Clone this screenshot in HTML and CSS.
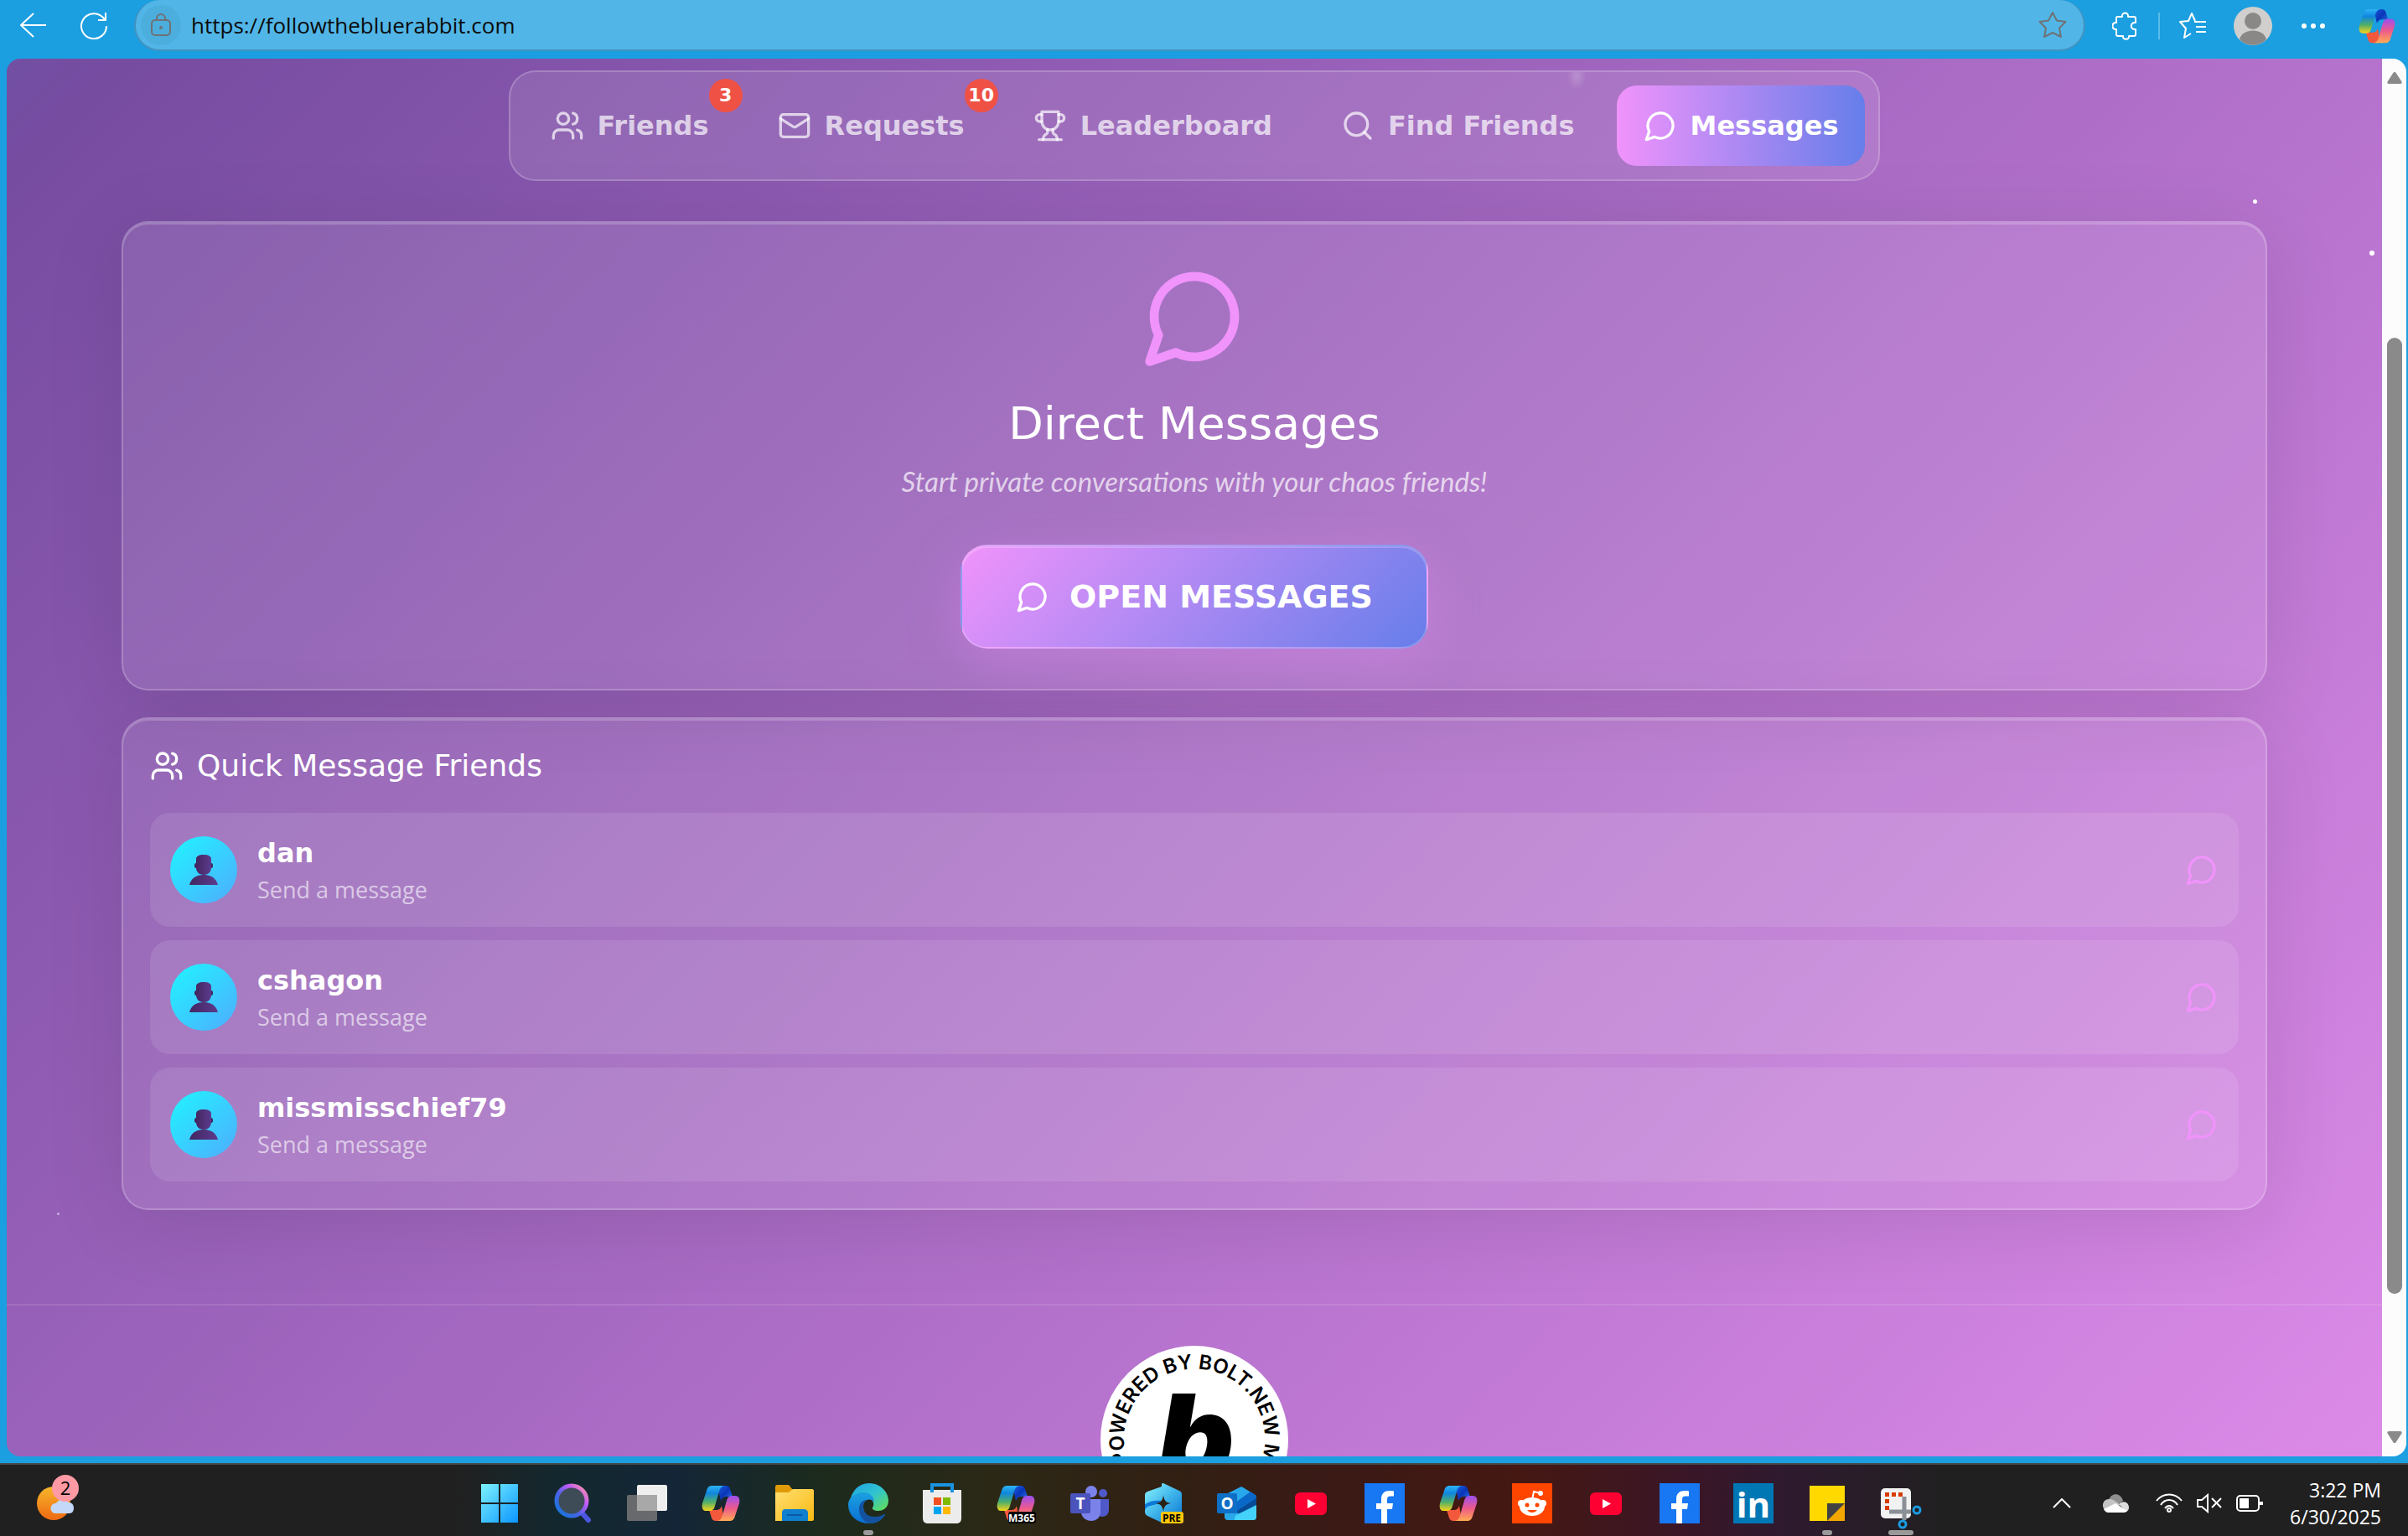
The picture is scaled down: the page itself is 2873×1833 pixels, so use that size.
FILE: index.html
```html
<!DOCTYPE html>
<html lang="en">
<head>
<meta charset="utf-8"/>
<meta content="width=device-width, initial-scale=1" name="viewport"/>
<title>Follow the Blue Rabbit - Messages</title>
<link rel="stylesheet" href="styles.css">
</head>
<body>

<!-- shared icons -->
<svg class="sprite" aria-hidden="true">
  <defs>
    <linearGradient id="cpLeft" x1="0" y1="0" x2="0" y2="1">
      <stop offset="0" stop-color="#2fb4f5"/><stop offset=".3" stop-color="#0f86de"/>
      <stop offset=".65" stop-color="#4fae6a"/><stop offset="1" stop-color="#f7d418"/>
    </linearGradient>
    <linearGradient id="cpRight" x1="0" y1="0" x2="0" y2="1">
      <stop offset="0" stop-color="#9a4ff0"/><stop offset=".5" stop-color="#ee5a8c"/><stop offset="1" stop-color="#ffab52"/>
    </linearGradient>
    <linearGradient id="cpBlue" x1="0" y1="0" x2="1" y2="1">
      <stop offset="0" stop-color="#1a5fe0"/><stop offset=".5" stop-color="#0a35b8"/><stop offset="1" stop-color="#2d7cf0"/>
    </linearGradient>
    <linearGradient id="person" x1="0" y1="0" x2="1" y2="0">
      <stop offset="0" stop-color="#432662"/><stop offset="1" stop-color="#5c3b8c"/>
    </linearGradient>
    <linearGradient id="win" x1="0" y1="0" x2="1" y2="1">
      <stop offset="0" stop-color="#7df3ff"/><stop offset="1" stop-color="#0a95ff"/>
    </linearGradient>
    <linearGradient id="ring" x1="1" y1="0" x2="0" y2="1">
      <stop offset="0" stop-color="#ff9a9a"/><stop offset=".3" stop-color="#c25cf5"/>
      <stop offset=".6" stop-color="#4a63e8"/><stop offset="1" stop-color="#0a7ad6"/>
    </linearGradient>
    <linearGradient id="folder" x1="0" y1="0" x2="1" y2="1">
      <stop offset="0" stop-color="#ffdf71"/><stop offset="1" stop-color="#f9b913"/>
    </linearGradient>
    <linearGradient id="edgeTop" x1="0" y1="0" x2="1" y2="1">
      <stop offset="0" stop-color="#1fa0e4"/><stop offset=".5" stop-color="#30c3d0"/><stop offset="1" stop-color="#66e04e"/>
    </linearGradient>
    <linearGradient id="edgeBlue" x1="0" y1="0" x2="0" y2="1">
      <stop offset="0" stop-color="#1ba0e0"/><stop offset="1" stop-color="#0b6fd3"/>
    </linearGradient>
    <linearGradient id="sun" x1="0" y1="0" x2="0" y2="1">
      <stop offset="0" stop-color="#f6b62c"/><stop offset="1" stop-color="#ee6a12"/>
    </linearGradient>
    <linearGradient id="preA" x1="0" y1="0" x2="1" y2="1">
      <stop offset="0" stop-color="#8df5ff"/><stop offset=".5" stop-color="#3fb5ea"/><stop offset="1" stop-color="#0b72d2"/>
    </linearGradient>
  </defs>
  <symbol id="i-chat" viewBox="0 0 24 24"><path d="M7.9 20A9 9 0 1 0 4 16.1L2 22Z"/></symbol>
  <symbol id="i-users" viewBox="0 0 24 24">
    <path d="M16 21v-2a4 4 0 0 0-4-4H6a4 4 0 0 0-4 4v2"/><circle cx="9" cy="7" r="4"/>
    <path d="M22 21v-2a4 4 0 0 0-3-3.87"/><path d="M16 3.13a4 4 0 0 1 0 7.75"/>
  </symbol>
  <symbol id="i-copilot" viewBox="0 0 48 48">
    <path d="M20 3h10c4 0 5 3 6 7l2 6h-7c-4 0-6 2-7 5z" fill="url(#cpBlue)"/>
    <path d="M28 45H18c-4 0-5-3-6-7l-2-6h8c4 0 6-2 7-5z" fill="#f2593c"/>
    <path d="M14 3h15c-4 0-6 3-7 7l-5 17c-1 4-3 6-7 6H7c-5 0-6-4-5-9L7 9c1-4 3-6 7-6z" fill="url(#cpLeft)"/>
    <path d="M34 45H19c4 0 6-3 7-7l5-17c1-4 3-6 7-6h3c5 0 6 4 5 9l-5 15c-1 4-3 6-7 6z" fill="url(#cpRight)"/>
  </symbol>
  <symbol id="i-person" viewBox="0 0 34 36">
    <path d="M0 36c2-8 8-12 17-12s15 4 17 12z" fill="url(#person)"/>
    <ellipse cx="8" cy="13" rx="2" ry="3" fill="#3d235a"/><ellipse cx="26" cy="13" rx="2" ry="3" fill="#3d235a"/>
    <path d="M8 5c0-3 3-5 9-5s9 2 9 5v10c0 5-3 9-9 9s-9-4-9-9z" fill="url(#person)"/>
  </symbol>
  <symbol id="i-youtube" viewBox="0 0 48 48">
    <rect x="5" y="11" width="38" height="27" rx="6" fill="#ff0033"/><path d="M20 19l10 5.500-10 5.500z" fill="#fff"/>
  </symbol>
  <symbol id="i-facebook" viewBox="0 0 48 48">
    <rect width="48" height="48" fill="#1877f2"/>
    <path d="M20 48V31h-6v-7h6v-5c0-7 4-10 10-10 2 0 4 0 5 .400v6h-4c-3 0-4 1.600-4 4V24h7l-1 7h-6v17z" fill="#fff"/>
  </symbol>
</svg>

<div class="browser">
  <header class="toolbar">
    <button class="tool-btn" type="button" aria-label="Back">
      <svg width="32" height="32" viewBox="0 0 32 32"><path d="M31 15H1M16 1L1 15l15 14"/></svg>
    </button>
    <button class="tool-btn reload" type="button" aria-label="Refresh">
      <svg width="32" height="32" viewBox="0 0 32 32"><path d="M31 16a15 15 0 1 1-5-11l4 4M30 0v9h-9"/></svg>
    </button>
    <form class="address">
      <span class="lock">
        <svg width="24" height="28" viewBox="0 0 24 28"><rect x="1" y="8" width="22" height="18" rx="4"/><path d="M7 8V6a5 5 0 0 1 10 0v2"/><circle cx="12" cy="17" r="1"/></svg>
      </span>
      <input type="text" aria-label="Address" value="https://followthebluerabbit.com"/>
      <button class="fav" type="button" aria-label="Add to favorites">
        <svg width="34" height="32" viewBox="0 0 34 32"><path d="M17 1l5 9.500 10.500 1.500-7.500 7.500 2 10.500-10-5-10 5 2-10.500L1.500 12 12 10.500z"/></svg>
      </button>
    </form>
    <div class="tools">
      <button class="tool-btn" type="button" aria-label="Extensions">
        <svg width="32" height="34" viewBox="0 0 32 34"><path d="M6 6h6c-1-6 8-6 7 0h7c1 0 2 1 2 2v5c-7-1-7 9 0 8v6c0 1-1 2-2 2h-6c1 5-8 5-7 0H7c-1 0-2-1-2-2v-6c-6 1-6-9 0-8V8c0-1 0-2 1-2z"/></svg>
      </button>
      <span class="divider"></span>
      <button class="tool-btn" type="button" aria-label="Favorites">
        <svg width="34" height="34" viewBox="0 0 34 34"><path d="M20 11l-4-9-4 9-10 1 7 8-2 11 8-5M19 12h14M21 18h12M21 24h12"/></svg>
      </button>
      <button class="tool-btn" type="button" aria-label="Profile">
        <svg class="solid" width="46" height="46" viewBox="0 0 46 46"><circle cx="23" cy="23" r="23" fill="#d0cfcd"/><circle cx="23" cy="17" r="10" fill="#8a8886"/><path d="M7 39c3-14 29-14 32 0-8 9-24 9-32 0z" fill="#8a8886"/></svg>
      </button>
      <button class="tool-btn" type="button" aria-label="More">
        <svg class="solid" width="28" height="8" viewBox="0 0 28 8"><circle cx="3" cy="4" r="3" fill="#fff"/><circle cx="14" cy="4" r="3" fill="#fff"/><circle cx="25" cy="4" r="3" fill="#fff"/></svg>
      </button>
      <button class="tool-btn copilot" type="button" aria-label="Copilot">
        <svg class="solid" width="46" height="46"><use href="#i-copilot"/></svg>
      </button>
    </div>
  </header>

  <div class="viewport">
    <div class="page">
      <span class="particle p1"></span>
      <span class="particle p2"></span>
      <span class="particle p3"></span>

      <main class="container">
        <nav class="tabs">
          <button class="tab" type="button">
            <svg class="icon"><use href="#i-users"/></svg>Friends<span class="count">3</span></button>
          <button class="tab" type="button">
            <svg class="icon" viewBox="0 0 24 24"><rect width="20" height="16" x="2" y="4" rx="2"/><path d="m22 7-8.970 5.700a1.940 1.940 0 0 1-2.060 0L2 7"/></svg>Requests<span class="count">10</span></button>
          <button class="tab" type="button">
            <svg class="icon" viewBox="0 0 24 24"><path d="M6 9H4.500a2.500 2.500 0 0 1 0-5H6"/><path d="M18 9h1.500a2.500 2.500 0 0 0 0-5H18"/><path d="M4 22h16"/><path d="M10 14.660V17c0 .550-.470.980-.970 1.210C7.850 18.750 7 20.240 7 22"/><path d="M14 14.660V17c0 .550.470.980.970 1.210C16.150 18.750 17 20.240 17 22"/><path d="M18 2H6v7a6 6 0 0 0 12 0V2Z"/></svg>Leaderboard
          </button>
          <button class="tab" type="button">
            <svg class="icon" viewBox="0 0 24 24"><circle cx="11" cy="11" r="8"/><path d="m21 21-4.300-4.300"/></svg>Find Friends
          </button>
          <button class="tab active" type="button">
            <svg class="icon"><use href="#i-chat"/></svg>Messages
          </button>
          <span class="glow"></span>
        </nav>

        <section class="card hero">
          <svg class="icon hero-icon"><use href="#i-chat"/></svg>
          <h2>Direct Messages</h2>
          <p>Start private conversations with your chaos friends!</p>
          <button class="open-btn" type="button"><svg class="icon"><use href="#i-chat"/></svg>OPEN MESSAGES</button>
        </section>

        <section class="card quick">
          <h3><svg class="icon"><use href="#i-users"/></svg>Quick Message Friends</h3>
          <button class="friend" type="button">
            <span class="avatar"><svg width="34" height="36"><use href="#i-person"/></svg></span>
            <span class="info"><span class="name">dan</span><span class="hint">Send a message</span></span>
            <svg class="icon"><use href="#i-chat"/></svg>
          </button>
          <button class="friend" type="button">
            <span class="avatar"><svg width="34" height="36"><use href="#i-person"/></svg></span>
            <span class="info"><span class="name">cshagon</span><span class="hint">Send a message</span></span>
            <svg class="icon"><use href="#i-chat"/></svg>
          </button>
          <button class="friend" type="button">
            <span class="avatar"><svg width="34" height="36"><use href="#i-person"/></svg></span>
            <span class="info"><span class="name">missmisschief79</span><span class="hint">Send a message</span></span>
            <svg class="icon"><use href="#i-chat"/></svg>
          </button>
        </section>
      </main>

      <footer class="site-footer">
        <a href="#" aria-label="Powered by Bolt.new">
          <svg width="224" height="224" viewBox="0 0 224 224">
            <circle cx="112" cy="112" r="112" fill="#fff"/>
            <path id="ringPath" d="M33 140A84 84 0 1 1 191 140" fill="none"/>
            <text class="ring-text"><textPath href="#ringPath">POWERED BY BOLT.NEW M</textPath></text>
            <text class="ring-b" x="68" y="160">b</text>
          </svg>
        </a>
      </footer>
    </div>

    <div class="scrollbar" aria-hidden="true">
      <svg width="18" height="14" viewBox="0 0 18 14"><path d="M7 1.500c1-2 3-2 4 0l6.500 10c.500 1 0 2.500-1.500 2.500H2C.500 14 0 12.500.500 11.500z"/></svg>
      <div class="track"><div class="thumb"></div></div>
      <svg width="18" height="14" viewBox="0 0 18 14"><path d="M7 12.500c1 2 3 2 4 0l6.500-10C18 1.500 17.500 0 16 0H2C.500 0 0 1.500.500 2.500z"/></svg>
    </div>
  </div>
</div>

<div class="taskbar">
  <button class="widget" type="button" aria-label="Widgets">
    <svg width="50" height="56" viewBox="0 0 50 56">
      <circle cx="20" cy="34" r="20" fill="url(#sun)"/>
      <path d="M22 46a6 6 0 0 1 1-12 9 9 0 0 1 15-1c5 0 6 4 6 7s-2 6-5 6z" fill="#c4d9fa"/>
      <circle cx="34" cy="16" r="16" fill="#ff9aa5"/>
      <text class="widget-num" x="34" y="24">2</text>
    </svg>
  </button>

  <div class="apps">
    <button type="button" aria-label="Start"><svg viewBox="0 0 48 48"><path d="M2 1h21v22H2zM25 1h21v22H25zM2 25h21v22H2zM25 25h21v22H25z" fill="url(#win)"/></svg></button>
    <button type="button" aria-label="Search"><svg viewBox="0 0 48 48"><path d="M34 35l8 9" stroke="#4a56e2" stroke-width="6" stroke-linecap="round"/><circle cx="22" cy="21" r="18" fill="#3d4c57" stroke="url(#ring)" stroke-width="5"/></svg></button>
    <button type="button" aria-label="Task view"><svg viewBox="0 0 48 48"><rect x="12" y="2" width="36" height="31" rx="2" fill="#efefef"/><rect x="0" y="14" width="36" height="31" rx="2" fill="#777" fill-opacity=".85"/><rect x="12" y="14" width="24" height="19" fill="#a8a8a8"/></svg></button>
    <button type="button" aria-label="Copilot"><svg><use href="#i-copilot"/></svg></button>
    <button type="button" aria-label="File Explorer"><svg viewBox="0 0 48 48"><path d="M1 4c0-1 1-2 2-2h14l5 6v8H1z" fill="#e09a08"/><path d="M1 11h16l5-4h23c1 0 2 1 2 2v34c0 1-1 2-2 2H1z" fill="url(#folder)"/><path d="M9 45V35c0-2 1-4 4-4h22c3 0 5 2 5 4v10z" fill="#0f7fd0"/><path d="M15 38h18" stroke="#0a5aa5" stroke-width="2"/></svg></button>
    <button class="running" type="button" aria-label="Edge"><svg viewBox="0 0 48 48"><path d="M2 22C4 9 13 0 25 0c13 0 23 10 23 21 0 8-6 12-12 12-5 0-8-2-7-4 3-4 1-12-9-13C10 15 3 19 2 22z" fill="url(#edgeTop)"/><path d="M0 26c0-9 9-15 18-15 9 0 13 6 13 11-6-5-13-2-13 6 0 9 7 13 14 13 5 0 9-2 11-4 1 0 1 1 0 2-4 6-11 9-18 9C10 48 0 38 0 26z" fill="url(#edgeBlue)"/><path d="M13 31c0-6 3-10 8-11-2 2-3 5-3 8 0 9 7 12 14 12 5 0 9-2 11-3 1 0 1 1 0 2-3 5-9 9-17 9-8-2-13-9-13-17z" fill="#12529f"/></svg></button>
    <button type="button" aria-label="Store"><svg viewBox="0 0 48 48"><path d="M1 8h46v33c0 5-2 7-6 7H7c-4 0-6-2-6-7z" fill="#ececec"/><path d="M12 11V2h24v9" fill="none" stroke="#1a93e0" stroke-width="4"/><path d="M14 17h9v9h-9z" fill="#f25022"/><path d="M25 17h9v9h-9z" fill="#7fba00"/><path d="M14 28h9v9h-9z" fill="#00a4ef"/><path d="M25 28h9v9h-9z" fill="#ffb900"/></svg></button>
    <button type="button" aria-label="Microsoft 365 Copilot"><svg viewBox="0 0 48 48"><use href="#i-copilot"/><rect x="15" y="34" width="33" height="14" rx="3" fill="#000"/><text class="tag tag-white" x="31" y="46">M365</text></svg></button>
    <button type="button" aria-label="Teams"><svg viewBox="0 0 48 48"><circle cx="40" cy="12" r="5" fill="#5059c9"/><path d="M32 19h15v13c0 5-4 8-8 8s-7-3-7-6z" fill="#5059c9"/><circle cx="26" cy="10" r="7" fill="#7b83eb"/><path d="M14 19h23v15c0 7-5 11-11 11s-12-4-12-11z" fill="#7b83eb"/><rect x="1" y="12" width="24" height="24" rx="2" fill="#4b53bc"/><text class="letter" x="13" y="31">T</text></svg></button>
    <button type="button" aria-label="Preview app"><svg viewBox="0 0 48 48"><path d="M2 14c0-2 1-3 3-4l17-6V1c0-1 1-1 2-1l19 9c2 1 3 2 3 4v20c0 3-1 4-3 5l-17 9c-1 1-3 1-4 0L5 39c-2-1-3-3-3-5z" fill="url(#preA)"/><path d="M2 33c2-9 12-4 20-12-7-1-14 0-20 4z" fill="#0c7ad8"/><path d="M24 14c1 7 3 9 9 10-6 1-8 3-9 10-1-7-3-9-9-10 6-1 8-3 9-10z" fill="#2c2214"/><rect x="21" y="34" width="27" height="14" rx="3" fill="#ffc60a"/><text class="tag" x="34" y="46">PRE</text></svg></button>
    <button type="button" aria-label="Outlook"><svg viewBox="0 0 48 48"><path d="M9 14L27 5c1-1 3-1 4 0l16 10v25c0 3-2 4-4 4H13c-3 0-4-2-4-4z" fill="#28a8ea"/><path d="M18 26L40 10l7 5v9L24 36z" fill="#0a68c8"/><path d="M24 33l23-15v9L26 39z" fill="#064a94"/><path d="M21 44c0-6 3-7 8-9l18-9v14c0 3-2 4-4 4z" fill="#45d2fa"/><rect x="0" y="12" width="24" height="24" rx="2" fill="#0f6fc6"/><text class="letter" x="12" y="31">O</text></svg></button>
    <button type="button" aria-label="YouTube"><svg><use href="#i-youtube"/></svg></button>
    <button type="button" aria-label="Facebook"><svg><use href="#i-facebook"/></svg></button>
    <button type="button" aria-label="Copilot"><svg><use href="#i-copilot"/></svg></button>
    <button type="button" aria-label="Reddit"><svg viewBox="0 0 48 48"><rect width="48" height="48" fill="#ff4500"/><path d="M24 20l2-10 8 2" fill="none" stroke="#fff" stroke-width="2"/><circle cx="34" cy="12" r="3" fill="#fff"/><circle cx="11" cy="24" r="4" fill="#fff"/><circle cx="37" cy="24" r="4" fill="#fff"/><ellipse cx="24" cy="28" rx="15" ry="11" fill="#fff"/><circle cx="18" cy="26" r="2.500" fill="#ff4500"/><circle cx="30" cy="26" r="2.500" fill="#ff4500"/><path d="M18 32c3 4 9 4 12 0z" fill="#ff4500"/></svg></button>
    <button type="button" aria-label="YouTube"><svg><use href="#i-youtube"/></svg></button>
    <button type="button" aria-label="Facebook"><svg><use href="#i-facebook"/></svg></button>
    <button type="button" aria-label="LinkedIn"><svg viewBox="0 0 48 48"><rect width="48" height="48" fill="#0077b5"/><text class="linkedin" x="24" y="41">in</text></svg></button>
    <button class="running" type="button" aria-label="Sticky Notes"><svg viewBox="0 0 48 48"><path d="M3 3h42v22L25 45H3z" fill="#ffd900"/><path d="M45 24v21H24z" fill="#f2a600"/><path d="M24 24h21L24 45z" fill="#424242"/></svg></button>
    <button class="running current" type="button" aria-label="Snipping Tool"><svg class="snip" viewBox="0 0 48 48"><rect x="0" y="6" width="36" height="36" rx="5" fill="#f2f2f2"/><path d="M5 11h5v5H5zM13 11h5v5h-5zM21 11h5v5h-5zM5 19h5v5H5zM5 27h5v5H5z" fill="#d83b01"/><path d="M10 34h26M28 16v28" stroke="#8a9096" stroke-width="5"/><circle cx="43" cy="32" r="4" fill="none" stroke="#1a9be0" stroke-width="3"/><circle cx="26" cy="49" r="4" fill="none" stroke="#1a9be0" stroke-width="3"/></svg></button>
  </div>

  <div class="tray">
    <svg width="22" height="12" viewBox="0 0 22 12"><path d="M1 11L11 1l10 10"/></svg>
    <svg class="cloud" width="32" height="22" viewBox="0 0 32 22"><path d="M8 7c3-9 14-9 17 1l-9 6z" fill="#8f8f8f"/><path d="M3 19C-2 12 3 5 9 6c5 0 9 4 13 7z" fill="#c4c4c4"/><path d="M20 12c4-5 12-3 12 4 0 2-1 4-3 5z" fill="#dcdcdc"/><path d="M2 18l14-7 14 9c-1 1-2 2-4 2H7c-2 0-4-2-5-4z" fill="#fff"/></svg>
    <div class="status">
      <svg width="32" height="24" viewBox="0 0 32 24"><path d="M1 9c8-10 22-10 30 0M6 14c5-8 15-8 20 0M11 18c3-4 7-4 10 0"/><circle cx="16" cy="20" r="2"/></svg>
      <svg width="32" height="24" viewBox="0 0 32 24"><path d="M2 8h5l7-6v20l-7-6H2zM19 6l11 11M30 6L19 17"/></svg>
      <svg width="32" height="22" viewBox="0 0 32 22"><rect x="1" y="2" width="26" height="18" rx="4"/><path d="M29 9v4M31 9v4"/><path d="M5 6h9v10H5z" fill="#fff"/></svg>
    </div>
    <div class="clock">3:22 PM<br/>6/30/2025</div>
  </div>
</div>

</body>
</html>
```
FILE: styles.css
```css
* {
  box-sizing: border-box;
}

html {
  height: 100%;
  overflow: hidden;
}

body {
  margin: 0;
  height: 100%;
  display: flex;
  flex-direction: column;
  overflow: hidden;
  background: #1b9fe0;
  font-family: "Open Sans", sans-serif;
  color: white;
}

button {
  border: none;
  background: none;
  padding: 0;
  font-family: inherit;
  color: inherit;
  cursor: pointer;
}

svg {
  display: block;
}

.sprite {
  position: absolute;
  width: 0;
  height: 0;
}

/* browser chrome */
.browser {
  flex: 1;
  min-height: 0;
  display: flex;
  flex-direction: column;
  padding: 0 2px 8px 8px;
}

.toolbar {
  display: flex;
  height: 70px;
  padding-bottom: 9px;
  margin-left: -4px;
  margin-right: -1px;
}

.tool-btn {
  width: 72px;
  display: flex;
  align-items: center;
  justify-content: center;
}

.tool-btn svg:not(.solid),
.fav svg,
.lock svg {
  fill: none;
  stroke: white;
  stroke-width: 2;
  stroke-linejoin: round;
}

.address {
  flex: 1;
  display: flex;
  align-items: center;
  margin: 0 12px;
  padding: 0 20px 0 6px;
  background: #51b6e7;
  border: 2px solid #4193c0;
  border-top: none;
  border-radius: 31px;
}

.lock {
  width: 48px;
  height: 48px;
  border-radius: 50%;
  background: #4baedd;
  display: flex;
  align-items: center;
  justify-content: center;
}

.address .lock svg,
.address .fav svg {
  stroke: #6f7275;
}

.address input {
  flex: 1;
  border: none;
  outline: none;
  background: none;
  padding: 0 12px;
  font-family: "Open Sans", sans-serif;
  font-size: 26px;
  color: #0b0b0b;
}

.tools {
  display: flex;
  align-items: center;
}

.divider {
  width: 2px;
  height: 32px;
  margin: 0 3px;
  background: #5bbcea;
}

.copilot {
  margin-left: 4px;
}

.viewport {
  flex: 1;
  min-height: 0;
  display: flex;
  overflow: hidden;
  border-radius: 16px;
}

.scrollbar {
  width: 29px;
  background: #fcfcfc;
  display: flex;
  flex-direction: column;
  align-items: center;
  padding: 16px 0;
  fill: #8a8a8a;
}

.track {
  flex: 1;
  display: flex;
  flex-direction: column;
  justify-content: flex-end;
  padding-bottom: 164px;
}

.thumb {
  width: 18px;
  height: 79%;
  border-radius: 9px;
  background: #8a8a8a;
}

/* site */
.page {
  position: relative;
  flex: 1;
  overflow: hidden;
  padding-top: 14px;
  background: linear-gradient(135deg, #7250a3 0%, #764ca1 3%, #dc8ae8 100%);
}

.container {
  max-width: 2560px;
  margin: 0 auto;
}

.icon {
  width: 40px;
  height: 40px;
  fill: none;
  stroke: currentColor;
  stroke-width: 2;
  stroke-linecap: round;
  stroke-linejoin: round;
}

.tabs {
  position: relative;
  width: fit-content;
  margin: 0 auto 48px;
  padding: 16px;
  display: flex;
  gap: 18px;
  background: rgba(255, 255, 255, 0.1);
  border: 2px solid rgba(255, 255, 255, 0.2);
  border-radius: 32px;
}

.tab {
  position: relative;
  display: flex;
  align-items: center;
  gap: 16px;
  height: 96px;
  padding: 0 32px;
  border-radius: 24px;
  font-family: "DejaVu Sans", sans-serif;
  font-size: 32px;
  font-weight: bold;
  color: rgba(255, 255, 255, 0.7);
}

.tab.active {
  background: linear-gradient(90deg, #f093fb, #667eea);
  color: white;
}

.count {
  position: absolute;
  top: -8px;
  right: -8px;
  width: 40px;
  height: 40px;
  border-radius: 50%;
  background: #ef5145;
  color: white;
  font-size: 22px;
  line-height: 40px;
  text-align: center;
}

.glow {
  position: absolute;
  top: 0;
  right: 348px;
  width: 24px;
  height: 22px;
  background: radial-gradient(ellipse at 50% 20%, rgba(255, 255, 255, 0.2), transparent 70%);
}

.card {
  border: 2px solid rgba(255, 255, 255, 0.2);
  border-radius: 32px;
  background: rgba(255, 255, 255, 0.1);
  box-shadow: 0 16px 96px rgba(0, 0, 0, 0.1), inset 0 2px 0 rgba(255, 255, 255, 0.2);
}

.hero {
  display: flex;
  flex-direction: column;
  align-items: center;
  padding: 48px;
  margin-bottom: 32px;
}

.hero-icon {
  width: 128px;
  height: 128px;
  color: #f093fb;
}

h2 {
  margin: 32px 0 12px;
  font-family: "DejaVu Sans", sans-serif;
  font-size: 54px;
  font-weight: normal;
  line-height: 64px;
}

.hero p {
  margin: 0 0 52px;
  font-family: Lato, sans-serif;
  font-size: 33px;
  font-style: italic;
  line-height: 48px;
  color: rgba(255, 255, 255, 0.7);
}

.open-btn {
  display: flex;
  align-items: center;
  gap: 24px;
  height: 124px;
  padding: 0 64px;
  border: 2px solid rgba(255, 255, 255, 0.2);
  border-radius: 32px;
  background: linear-gradient(135deg, #f093fb, #667eea);
  box-shadow: 0 16px 64px rgba(240, 147, 251, 0.3), inset 0 2px 0 rgba(255, 255, 255, 0.2);
  font-family: "DejaVu Sans", sans-serif;
  font-size: 38px;
  font-weight: bold;
}

.quick {
  display: flex;
  flex-direction: column;
  gap: 16px;
  padding: 32px;
}

h3 {
  display: flex;
  align-items: center;
  gap: 16px;
  margin: 0 0 16px;
  font-family: "DejaVu Sans", sans-serif;
  font-size: 36px;
  font-weight: normal;
  line-height: 48px;
}

.friend {
  display: flex;
  align-items: center;
  gap: 24px;
  padding: 24px;
  border-radius: 24px;
  background: rgba(255, 255, 255, 0.1);
  text-align: left;
}

.friend .icon {
  color: #f093fb;
}

.avatar {
  width: 80px;
  height: 80px;
  border-radius: 50%;
  background: linear-gradient(135deg, #1ff5ff, #4facfe);
  display: flex;
  align-items: center;
  justify-content: center;
}

.info {
  flex: 1;
  display: flex;
  flex-direction: column;
}

.name {
  font-family: "DejaVu Sans", sans-serif;
  font-size: 32px;
  font-weight: bold;
  line-height: 48px;
}

.hint {
  font-size: 27px;
  line-height: 40px;
  color: rgba(255, 255, 255, 0.6);
}

.site-footer {
  display: flex;
  justify-content: center;
  margin-top: 112px;
  padding: 48px 0;
  border-top: 2px solid rgba(255, 255, 255, 0.1);
}

.ring-text {
  font-family: Inter, sans-serif;
  font-size: 24px;
  font-weight: 600;
  fill: black;
}

.ring-b {
  font-family: Inter, sans-serif;
  font-size: 142px;
  font-weight: 900;
  font-style: italic;
  fill: black;
}

/* floating dots over the page */
.particle {
  position: absolute;
  border-radius: 50%;
  background: white;
}

.p1 {
  top: 168px;
  right: 149px;
  width: 5px;
  height: 5px;
}

.p2 {
  top: 229px;
  right: 9px;
  width: 6px;
  height: 6px;
}

.p3 {
  bottom: 288px;
  left: 60px;
  width: 3px;
  height: 3px;
  opacity: 0.5;
}

/* taskbar */
.taskbar {
  height: 87px;
  display: grid;
  grid-template-columns: 1fr auto 1fr;
  align-items: center;
  padding: 7px 10px 0 0;
  border-top: 2px solid #484848;
  background: linear-gradient(90deg, #202020 19%, #13282e 23%, #142637 28%, #1c2b1d 34%, #2b2816 41%, #331f13 50%, #3a1a16 55%, #451812 63%, #3a1627 70%, #2f1a2f 74%, #202020 81%);
}

.widget {
  justify-self: start;
  margin-left: 44px;
}

.widget svg {
  margin-bottom: 12px;
}

.widget-num {
  font-family: "Open Sans", sans-serif;
  font-size: 22px;
  text-anchor: middle;
  fill: black;
}

.apps {
  display: flex;
}

.apps button {
  position: relative;
  width: 88px;
  height: 78px;
  display: flex;
  align-items: center;
  justify-content: center;
}

.apps svg {
  width: 48px;
  height: 48px;
  overflow: visible;
}

.running::after {
  content: "";
  position: absolute;
  bottom: 1px;
  left: 50%;
  width: 12px;
  height: 6px;
  border-radius: 3px;
  background: #9a9a9a;
  transform: translateX(-50%);
}

.running.current::after {
  width: 30px;
}

.letter,
.tag,
.linkedin {
  font-family: "Open Sans", sans-serif;
  font-weight: bold;
  text-anchor: middle;
}

.letter {
  font-size: 19px;
  fill: white;
}

.tag {
  font-size: 12px;
  fill: black;
}

.tag-white {
  fill: white;
}

.linkedin {
  font-size: 42px;
  fill: white;
}

.tray {
  justify-self: end;
  display: flex;
  align-items: center;
  margin-right: 22px;
  fill: none;
  stroke: white;
  stroke-width: 2;
}

.cloud {
  margin: 0 32px 0 37px;
  stroke: none;
}

.status {
  display: flex;
  align-items: center;
  gap: 16px;
}

.clock {
  margin-left: 32px;
  font-size: 23px;
  line-height: 32px;
  text-align: right;
}
```
